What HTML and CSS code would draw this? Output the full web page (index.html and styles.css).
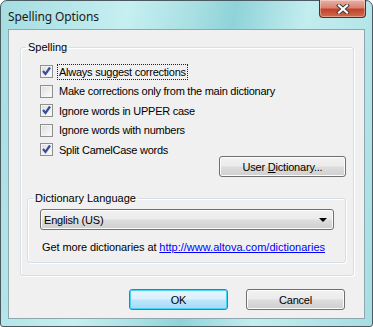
FILE: index.html
```html
<!DOCTYPE html>
<html lang="en">
<head>
  <meta charset="UTF-8">
  <title>Spelling Options</title>
  <link rel="stylesheet" href="styles.css">
</head>
<body>
  <div class="window">
    <div class="titlebar">
      <span class="title">Spelling Options</span>
      <div class="close">
        <svg width="16" height="10" viewBox="0 0 16 10">
          <path d="M4 1.5 L12 8.5 M12 1.5 L4 8.5" stroke="#3b3b3b" stroke-width="4" stroke-linecap="square"/>
          <path d="M4 1.5 L12 8.5 M12 1.5 L4 8.5" stroke="#fff" stroke-width="2.2" stroke-linecap="square"/>
        </svg>
      </div>
    </div>

    <div class="client">
      <fieldset class="group">
        <legend>Spelling</legend>
        <div class="group-body">
          <div class="checks">
            <div class="check"><span class="box on"></span><span class="label focus">Always suggest corrections</span></div>
            <div class="check"><span class="box"></span><span class="label">Make corrections only from the main dictionary</span></div>
            <div class="check"><span class="box on"></span><span class="label">Ignore words in UPPER case</span></div>
            <div class="check"><span class="box"></span><span class="label">Ignore words with numbers</span></div>
            <div class="check"><span class="box on"></span><span class="label">Split CamelCase words</span></div>
          </div>
          <div class="user-row">
            <button class="btn user-btn">User <u>D</u>ictionary...</button>
          </div>

          <fieldset class="group dict">
            <legend>Dictionary Language</legend>
            <div class="dict-body">
              <div class="combo">
                <span>English (US)</span>
                <span class="arrow"></span>
              </div>
              <p class="more">Get more dictionaries at <a href="#">http://www.altova.com/dictionaries</a></p>
            </div>
          </fieldset>
        </div>
      </fieldset>

      <div class="actions">
        <button class="btn ok">OK</button>
        <button class="btn">Cancel</button>
      </div>
    </div>
  </div>
</body>
</html>
```

FILE: styles.css
```css
body {
  margin: 0;
  background: #fff;
}

.window {
  width: 373px;
  height: 327px;
  box-sizing: border-box;
  border: 1px solid #4a5a60;
  border-radius: 7px 7px 3px 3px;
  background: linear-gradient(100deg, #a4dde1 0%, #c6eff1 30%, #a9e0e3 45%, #8fd3d8 55%, #c3edef 72%, #a6dee2 100%);
  display: flex;
  flex-direction: column;
  font-family: "Liberation Sans", Arial, sans-serif;
  font-size: 11px;
  color: #000;
}

.titlebar {
  height: 28px;
  display: flex;
  justify-content: space-between;
  align-items: flex-start;
  padding: 0 6px 0 7px;
}

.title {
  font-family: "Noto Sans", sans-serif;
  font-size: 12px;
  color: #1b1b1b;
  margin-top: 7px;
  letter-spacing: -0.1px;
}

.close {
  width: 45px;
  height: 17px;
  margin-top: -1px;
  border: 1px solid #5c2a22;
  border-top: none;
  border-radius: 0 0 4px 4px;
  background: linear-gradient(#eab1a5 0%, #d98472 45%, #c2432a 55%, #d06a4c 100%);
  display: flex;
  align-items: center;
  justify-content: center;
  box-shadow: inset 0 0 0 1px rgba(255, 255, 255, 0.35);
}

.client {
  margin: 0 7px 7px 7px;
  flex: 1;
  border: 1px solid #8ea6ad;
  background: #f0f0f0;
  display: flex;
  flex-direction: column;
}

.group {
  margin: 11px 10px 0 11px;
  padding: 0;
  border: 1px solid #d5dfe5;
  border-radius: 3px;
  box-shadow: 1px 1px 0 #fff, inset 1px 1px 0 #fff;
}

.group legend {
  margin-left: 5px;
  padding: 0 2px;
  line-height: 13px;
}

.group-body {
  padding: 11px 7px 12px 6px;
}

.checks {
  display: flex;
  flex-direction: column;
  gap: 6.5px;
  margin-left: 13px;
}

.check {
  height: 13px;
  display: flex;
  align-items: center;
  gap: 4px;
}

.box {
  width: 11px;
  height: 11px;
  border: 1px solid #8e8f8f;
  background: linear-gradient(135deg, #dcdcdc, #fdfdfd);
  box-shadow: inset 0 0 0 1px #f4f4f4;
}

.box.on {
  background-image: url("data:image/svg+xml,%3Csvg xmlns='http://www.w3.org/2000/svg' width='11' height='11'%3E%3Cpath d='M2 5 L4.5 8 L9 1.5' fill='none' stroke='%23374f98' stroke-width='2.2'/%3E%3C/svg%3E"), linear-gradient(135deg, #dcdcdc, #fdfdfd);
}

.label {
  letter-spacing: -0.25px;
  padding: 1px 1px;
  border: 1px solid transparent;
}

.label.focus {
  border: 1px dotted #222;
}

.user-row {
  display: flex;
  justify-content: flex-end;
}

.btn {
  font-family: inherit;
  font-size: 11px;
  color: #000;
  height: 21px;
  padding: 0;
  border: 1px solid #707070;
  border-radius: 3px;
  background: linear-gradient(#f2f2f2 0%, #ebebeb 48%, #dddddd 52%, #cfcfcf 100%);
  box-shadow: inset 0 0 0 1px #fcfcfc;
  letter-spacing: -0.2px;
}

.user-btn {
  width: 127px;
}

.dict {
  margin: 15px 0 0 0;
}

.dict-body {
  padding: 4px 11px 8px 12px;
}

.combo {
  height: 19px;
  border: 1px solid #707070;
  border-radius: 3px;
  background: linear-gradient(#f2f2f2 0%, #ebebeb 48%, #dddddd 52%, #cfcfcf 100%);
  box-shadow: inset 0 0 0 1px #fcfcfc;
  display: flex;
  align-items: center;
  justify-content: space-between;
  padding: 0 6px 0 3px;
  letter-spacing: -0.2px;
}

.arrow {
  width: 0;
  height: 0;
  border-left: 4px solid transparent;
  border-right: 4px solid transparent;
  border-top: 4px solid #000;
}

.more {
  margin: 11px 0 0 2px;
  line-height: 13px;
  letter-spacing: -0.1px;
}

.more a {
  color: #0000ff;
  letter-spacing: 0;
}

.actions {
  display: flex;
  justify-content: flex-end;
  gap: 18px;
  margin: 13px 19px 0 0;
}

.actions .btn {
  width: 99px;
}

.btn.ok {
  border-color: #3c7fb1;
  background: linear-gradient(#eaf6fd 0%, #d9f0fc 48%, #bee6fd 52%, #a7d9f5 100%);
  box-shadow: inset 0 0 0 1px #48d5f5;
}
```
